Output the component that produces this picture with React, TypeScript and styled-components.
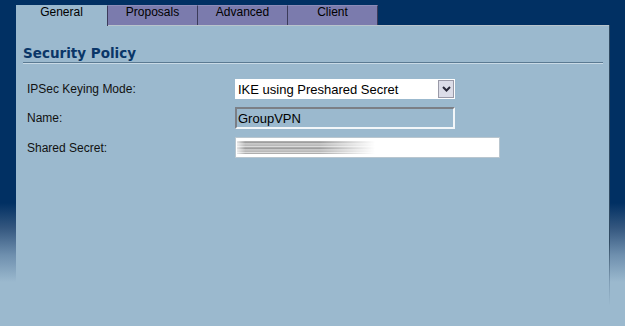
import styled, { createGlobalStyle } from 'styled-components';

const NAVY = '#013063';
const PANEL = '#9bb9ce';

const GlobalStyle = createGlobalStyle`
  html, body {
    margin: 0;
    padding: 0;
  }

  body {
    font-family: 'Liberation Sans', Arial, sans-serif;
    background: ${PANEL};
  }
`;

const Page = styled.div`
  display: flex;
  flex-direction: column;
  width: 625px;
  height: 326px;
  padding: 5px 15px 0 16px;
  box-sizing: border-box;
  overflow: hidden;
  background: linear-gradient(
    to bottom,
    ${NAVY} 0px,
    ${NAVY} 203px,
    #34577f 228px,
    #6e8fae 255px,
    ${PANEL} 282px
  );
`;

const TabBar = styled.div`
  display: flex;
  height: 20px;
`;

const Tab = styled.div<{ active?: boolean }>`
  display: flex;
  justify-content: center;
  align-items: flex-start;
  width: 90px;
  height: ${({ active }) => (active ? '21px' : '20px')};
  box-sizing: border-box;
  padding-top: 0;
  border-top: 1px solid ${({ active }) => (active ? '#9bb9ce' : '#8c8cb8')};
  border-right: 1px solid #3b3b5a;
  background: ${({ active }) => (active ? PANEL : '#7b7bad')};
  color: #000;
  font-size: 12px;
  line-height: 13px;
  position: relative;
  z-index: ${({ active }) => (active ? 1 : 0)};

  &:first-child {
    width: 92px;
  }
`;

const Panel = styled.div`
  flex: 1;
  border-image: linear-gradient(to bottom, #2f4a62 0%, #2f4a62 72%, #7f9db5 85%, ${PANEL} 93%) 1;
  border-width: 0 1px 0 0;
  border-style: solid;
  box-shadow: inset 0 1px 0 #b9c4cc;
  background: ${PANEL};
  padding: 20px 6px 0 7px;
`;

const Heading = styled.h2`
  margin: 0;
  padding-bottom: 1px;
  font-family: 'DejaVu Sans', Verdana, sans-serif;
  font-weight: 700;
  font-size: 13.5px;
  line-height: 16px;
  color: #0a3668;
  border-bottom: 1px solid #5b7a92;
  box-shadow: 0 1px 0 #c9dae6;
`;

const Form = styled.div`
  display: grid;
  grid-template-columns: 208px auto;
  row-gap: 8px;
  align-items: center;
  margin: 16px 0 0 4px;
`;

const Label = styled.label`
  font-size: 12px;
  color: #111;
`;

const SelectBox = styled.div`
  display: flex;
  align-items: center;
  width: 220px;
  height: 20px;
  box-sizing: border-box;
  background: #fff;
  padding-right: 1px;
`;

const Select = styled.select`
  flex: 1;
  appearance: none;
  border: none;
  outline: none;
  background: transparent;
  font-family: 'Liberation Sans', Arial, sans-serif;
  font-size: 13px;
  color: #000;
  padding: 0 0 0 3px;
  height: 18px;
`;

const ArrowButton = styled.span`
  display: flex;
  justify-content: center;
  align-items: center;
  width: 16px;
  height: 18px;
  box-sizing: border-box;
  border: 1px solid #9a9aa8;
  background: #dcdde8;
  color: #2a2a3a;
`;

const ReadOnlyInput = styled.input`
  width: 220px;
  height: 22px;
  box-sizing: border-box;
  border-style: solid;
  border-width: 2px;
  border-color: #7b7f86 #f2f6f9 #f2f6f9 #7b7f86;
  background: transparent;
  font-family: 'Liberation Sans', Arial, sans-serif;
  font-size: 13px;
  color: #000;
  padding: 0 0 0 1px;
  outline: none;
`;

const SecretBox = styled.div`
  display: flex;
  align-items: center;
  width: 265px;
  height: 21px;
  box-sizing: border-box;
  border: 1px solid #b9c6cf;
  background: #fff;
  padding-left: 1px;
`;

const Smear = styled.span`
  display: block;
  width: 138px;
  height: 13px;
  background: repeating-linear-gradient(
    to bottom,
    #d2d2d2 0px,
    #8a8a8a 1px,
    #dcdcdc 3px,
    #a8a8a8 4px,
    #ececec 6px
  );
  filter: blur(0.6px);
  mask-image: linear-gradient(to right, rgba(0, 0, 0, 0.3) 0%, #000 6%, #000 60%, transparent 100%);
`;

function Chevron() {
  return (
    <svg width="9" height="6" viewBox="0 0 9 6">
      <path d="M1 1 L4.5 4.5 L8 1" fill="none" stroke="currentColor" strokeWidth="2" />
    </svg>
  );
}

const tabs = ['General', 'Proposals', 'Advanced', 'Client'];

export default function App() {
  return (
    <>
      <GlobalStyle />
      <Page>
        <TabBar>
          {tabs.map((t, i) => (
            <Tab key={t} active={i === 0}>
              {t}
            </Tab>
          ))}
        </TabBar>
        <Panel>
          <Heading>Security Policy</Heading>
          <Form>
            <Label>IPSec Keying Mode:</Label>
            <SelectBox>
              <Select defaultValue="ike">
                <option value="ike">IKE using Preshared Secret</option>
                <option value="manual">Manual Key</option>
              </Select>
              <ArrowButton>
                <Chevron />
              </ArrowButton>
            </SelectBox>
            <Label>Name:</Label>
            <ReadOnlyInput readOnly value="GroupVPN" />
            <Label>Shared Secret:</Label>
            <SecretBox>
              <Smear />
            </SecretBox>
          </Form>
        </Panel>
      </Page>
    </>
  );
}
